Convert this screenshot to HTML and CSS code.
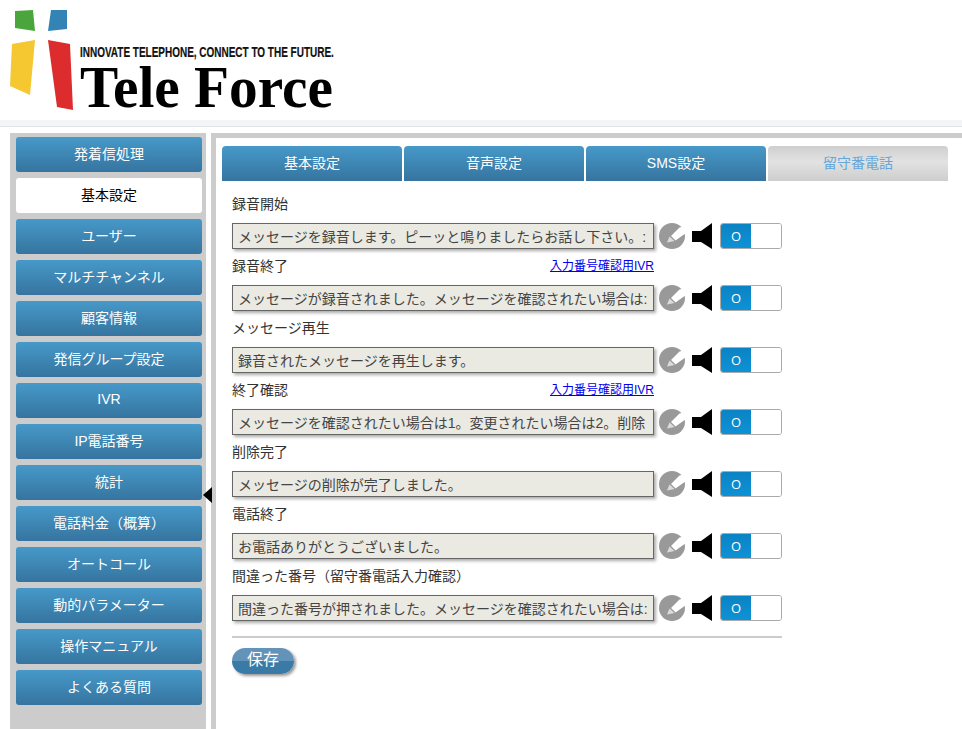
FILE: index.html
```html
<!DOCTYPE html>
<html lang="ja">
<head>
<meta charset="utf-8">
<title>Tele Force</title>
<link rel="stylesheet" href="styles.css">
</head>
<body>
<svg class="defs" width="0" height="0" aria-hidden="true">
  <symbol id="pencil" viewBox="0 0 26 26">
    <circle cx="13" cy="13" r="13" fill="#999"/>
    <polygon points="12,13 20.5,4.5 27,3 27,10 16.5,17.5" fill="#fff"/>
    <polygon points="8,19.5 10.5,13.5 15.5,18" fill="#dcdcdc"/>
    <path d="M10.8 12.8l5.3 5" stroke="#999" stroke-width="0.8" fill="none"/>
  </symbol>
  <symbol id="horn" viewBox="0 0 20 26">
    <polygon points="0,8 9,8 20,0 20,26 9,19 0,19" fill="#000"/>
  </symbol>
</svg>
<header class="header">
  <svg class="logo-mark" width="76" height="112" viewBox="0 0 76 112">
    <polygon points="15,11 33,10 35,31 15,28" fill="#4aa63c"/>
    <polygon points="51,10 67,10 67,29 48,31" fill="#3384b5"/>
    <polygon points="12,44 35,40 30,95 10,86" fill="#f5c731"/>
    <polygon points="48,40 70,44 73,110 57,107" fill="#dc2c2e"/>
  </svg>
  <div class="brand">
    <div class="tagline"><span>INNOVATE TELEPHONE, CONNECT TO THE FUTURE.</span></div>
    <div class="wordmark"><span>Tele Force</span></div>
  </div>
</header>
<div class="strip"></div>
<div class="main">
  <nav class="sidebar">
    <a class="nav-item">発着信処理</a>
    <a class="nav-item active">基本設定</a>
    <a class="nav-item">ユーザー</a>
    <a class="nav-item">マルチチャンネル</a>
    <a class="nav-item">顧客情報</a>
    <a class="nav-item">発信グループ設定</a>
    <a class="nav-item">IVR</a>
    <a class="nav-item">IP電話番号</a>
    <a class="nav-item">統計</a>
    <a class="nav-item">電話料金（概算）</a>
    <a class="nav-item">オートコール</a>
    <a class="nav-item">動的パラメーター</a>
    <a class="nav-item">操作マニュアル</a>
    <a class="nav-item">よくある質問</a>
    <span class="collapse-arrow"></span>
  </nav>
  <main class="panel">
    <div class="tabs">
      <a class="tab">基本設定</a>
      <a class="tab">音声設定</a>
      <a class="tab">SMS設定</a>
      <a class="tab current">留守番電話</a>
    </div>
    <form class="form">
      <div class="row">
        <div class="label-line"><span>録音開始</span></div>
        <div class="control">
          <input class="msg" readonly value="メッセージを録音します。ピーッと鳴りましたらお話し下さい。:">
          <svg class="edit"><use href="#pencil"/></svg>
          <svg class="speaker"><use href="#horn"/></svg>
          <div class="toggle"><span class="on">O</span><span class="off"></span></div>
        </div>
      </div>
      <div class="row">
        <div class="label-line"><span>録音終了</span><a class="ivr" href="#">入力番号確認用IVR</a></div>
        <div class="control">
          <input class="msg" readonly value="メッセージが録音されました。メッセージを確認されたい場合は:">
          <svg class="edit"><use href="#pencil"/></svg>
          <svg class="speaker"><use href="#horn"/></svg>
          <div class="toggle"><span class="on">O</span><span class="off"></span></div>
        </div>
      </div>
      <div class="row">
        <div class="label-line"><span>メッセージ再生</span></div>
        <div class="control">
          <input class="msg" readonly value="録音されたメッセージを再生します。">
          <svg class="edit"><use href="#pencil"/></svg>
          <svg class="speaker"><use href="#horn"/></svg>
          <div class="toggle"><span class="on">O</span><span class="off"></span></div>
        </div>
      </div>
      <div class="row">
        <div class="label-line"><span>終了確認</span><a class="ivr" href="#">入力番号確認用IVR</a></div>
        <div class="control">
          <input class="msg" readonly value="メッセージを確認されたい場合は1。変更されたい場合は2。削除">
          <svg class="edit"><use href="#pencil"/></svg>
          <svg class="speaker"><use href="#horn"/></svg>
          <div class="toggle"><span class="on">O</span><span class="off"></span></div>
        </div>
      </div>
      <div class="row">
        <div class="label-line"><span>削除完了</span></div>
        <div class="control">
          <input class="msg" readonly value="メッセージの削除が完了しました。">
          <svg class="edit"><use href="#pencil"/></svg>
          <svg class="speaker"><use href="#horn"/></svg>
          <div class="toggle"><span class="on">O</span><span class="off"></span></div>
        </div>
      </div>
      <div class="row">
        <div class="label-line"><span>電話終了</span></div>
        <div class="control">
          <input class="msg" readonly value="お電話ありがとうございました。">
          <svg class="edit"><use href="#pencil"/></svg>
          <svg class="speaker"><use href="#horn"/></svg>
          <div class="toggle"><span class="on">O</span><span class="off"></span></div>
        </div>
      </div>
      <div class="row">
        <div class="label-line"><span>間違った番号（留守番電話入力確認）</span></div>
        <div class="control">
          <input class="msg" readonly value="間違った番号が押されました。メッセージを確認されたい場合は:">
          <svg class="edit"><use href="#pencil"/></svg>
          <svg class="speaker"><use href="#horn"/></svg>
          <div class="toggle"><span class="on">O</span><span class="off"></span></div>
        </div>
      </div>
      <div class="divider"></div>
      <button class="save" type="button">保存</button>
    </form>
  </main>
</div>
</body>
</html>
```
FILE: styles.css
```css
* { box-sizing: border-box; }
html, body { margin: 0; height: 100%; }
body {
  background: #fff;
  font-family: "Liberation Sans", "Noto Sans CJK JP", sans-serif;
  font-size: 14px;
  color: #333;
  overflow: hidden;
  display: flex;
  flex-direction: column;
}
.defs { position: absolute; }
.header {
  height: 120px;
  flex: none;
  display: flex;
  background: #fff;
}
.logo-mark { flex: none; width: 76px; height: 112px; }
.brand { margin-left: 4px; padding-top: 43px; }
.tagline {
  height: 17px;
  width: 255px;
  font-weight: 700;
  font-size: 15px;
  line-height: 17px;
  color: #111;
  white-space: nowrap;
  -webkit-text-stroke: 0.2px #111;
}
.tagline span { display: inline-block; transform-origin: 0 50%; transform: scaleX(0.665); }
.wordmark {
  font-family: "Liberation Serif", serif;
  font-weight: 700;
  font-size: 60px;
  line-height: 54px;
  color: #000;
  white-space: nowrap;
}
.wordmark span { display: inline-block; transform-origin: 0 50%; transform: scaleX(0.955); }
.strip {
  height: 7px;
  flex: none;
  background: #f3f4f6;
  border-bottom: 1px solid #e2e4e8;
}
.main {
  flex: 1;
  display: flex;
  min-height: 0;
  margin-top: 6px;
  padding-left: 10px;
}
.sidebar {
  position: relative;
  width: 196px;
  flex: none;
  background: #ccc;
  padding: 4px 4px 0 6px;
  display: flex;
  flex-direction: column;
  gap: 6px;
}
.nav-item {
  height: 35px;
  flex: none;
  padding-bottom: 4px;
  border-radius: 3px;
  display: flex;
  align-items: center;
  justify-content: center;
  color: #fff;
  background: linear-gradient(#4699c9, #36749f);
}
.nav-item.active { background: #fff; color: #000; }
.collapse-arrow {
  position: absolute;
  left: 193px;
  top: 354px;
  width: 0;
  height: 0;
  border-style: solid;
  border-width: 8px 9px 8px 0;
  border-color: transparent #000 transparent transparent;
}
.panel {
  flex: 1;
  margin-left: 5px;
  background: #fff;
  border-left: 5px solid #ccc;
  border-top: 5px solid #ccc;
  padding: 8px 0 0 6px;
  min-width: 0;
}
.tabs { display: flex; gap: 2px; }
.tab {
  width: 180px;
  height: 35px;
  padding-bottom: 4px;
  border-radius: 4px 4px 0 0;
  display: flex;
  align-items: center;
  justify-content: center;
  color: #fff;
  background: linear-gradient(#4699c9, #36749f);
}
.tab.current {
  color: #66a6d8;
  background: linear-gradient(#cfcfcf, #e2e2e2 45%, #cdcdcd);
}
.form { width: 550px; margin-left: 10px; padding-top: 12px; }
.row { margin-bottom: 6px; }
.label-line {
  height: 20px;
  margin-bottom: 10px;
  padding-top: 2px;
  width: 422px;
  display: flex;
  justify-content: space-between;
  align-items: center;
  line-height: 18px;
}
.ivr { font-size: 12px; color: #00e; text-decoration: underline; }
.control { display: flex; align-items: center; height: 26px; }
.msg {
  width: 422px;
  height: 26px;
  flex: none;
  padding: 0 4px 0 5px;
  border: 1px solid #666;
  border-radius: 0;
  background: #eae9e2;
  box-shadow: 2px 2px 3px #aaa;
  font: inherit;
  color: #444;
  outline: none;
}
.edit { width: 26px; height: 26px; margin-left: 5px; flex: none; }
.speaker { width: 20px; height: 26px; margin-left: 7px; flex: none; }
.toggle {
  width: 62px;
  height: 26px;
  margin-left: 8px;
  flex: none;
  display: flex;
  border: 1px solid #aaa;
  border-radius: 3px;
  overflow: hidden;
}
.on {
  width: 30px;
  background: linear-gradient(#0b83c4, #0d92d6);
  color: #fff;
  display: flex;
  align-items: center;
  justify-content: center;
  font-family: "Open Sans", sans-serif;
  font-size: 13px;
}
.off { flex: 1; background: #fff; }
.divider { height: 2px; background: #ccc; margin-top: 15px; }
.save {
  display: block;
  margin-top: 10px;
  width: 62px;
  height: 26px;
  padding: 0 0 3px;
  border: 0;
  border-radius: 13px;
  background: linear-gradient(#6393b8 50%, #3a7aa6 50%);
  box-shadow: 2px 2px 3px #999;
  color: #fff;
  font: inherit;
  font-size: 16px;
  line-height: 20px;
}
```
